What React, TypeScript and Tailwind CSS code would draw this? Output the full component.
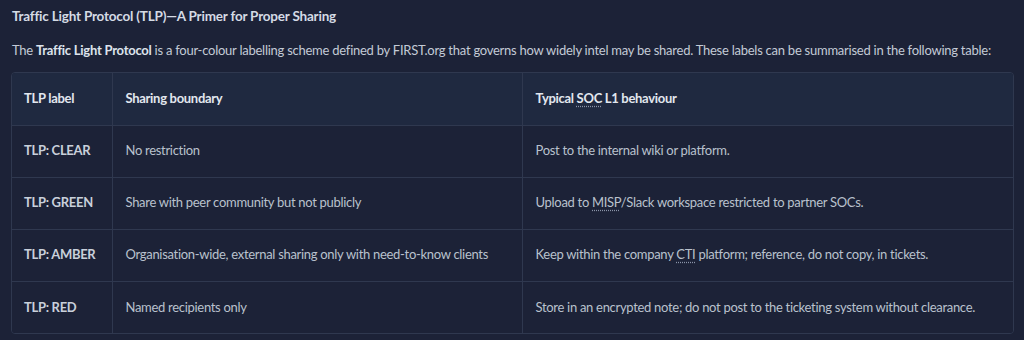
import React from 'react';

const Abbr = ({ children }: { children: React.ReactNode }) => (
  <abbr className="underline decoration-dotted decoration-[#8a94a8] underline-offset-[3px]">{children}</abbr>
);

const rows: { label: string; boundary: string; behaviour: React.ReactNode }[] = [
  { label: 'TLP: CLEAR', boundary: 'No restriction', behaviour: 'Post to the internal wiki or platform.' },
  {
    label: 'TLP: GREEN',
    boundary: 'Share with peer community but not publicly',
    behaviour: (
      <>
        Upload to <Abbr>MISP</Abbr>/Slack workspace restricted to partner SOCs.
      </>
    ),
  },
  {
    label: 'TLP: AMBER',
    boundary: 'Organisation-wide, external sharing only with need-to-know clients',
    behaviour: (
      <>
        Keep within the company <Abbr>CTI</Abbr> platform; reference, do not copy, in tickets.
      </>
    ),
  },
  {
    label: 'TLP: RED',
    boundary: 'Named recipients only',
    behaviour: 'Store in an encrypted note; do not post to the ticketing system without clearance.',
  },
];

export default function App() {
  return (
    <div className="w-[1024px] h-[340px] bg-[#1c2237] px-[11px] pt-[7px] font-['Lato',sans-serif] text-[13px] tracking-[-0.25px] overflow-hidden">
      <h3 className="ml-[1px] font-bold text-[13.5px] tracking-[-0.2px] text-[#d5dbe5] leading-[18px]">Traffic Light Protocol (TLP)—A Primer for Proper Sharing</h3>
      <p className="ml-[1px] mt-[16px] text-[#c3cad6] leading-[18px] whitespace-nowrap">
        The <strong className="font-bold text-[#dde3ec]">Traffic Light Protocol</strong> is a four-colour labelling scheme defined by FIRST.org that governs how widely intel may be shared. These labels can be summarised in the following table:
      </p>
      <div className="mt-[13px] w-[1003px] border border-[#2f384f] rounded-[4px] overflow-hidden">
        <table className="w-full border-collapse table-fixed whitespace-nowrap tracking-[-0.3px]">
          <colgroup>
            <col className="w-[100px]" />
            <col className="w-[410px]" />
            <col />
          </colgroup>
          <thead>
            <tr className="bg-[#1f2940] h-[52px]">
              <th className="text-left font-bold text-[#e2e7ef] px-[12px] border-r border-[#2f384f]">TLP label</th>
              <th className="text-left font-bold text-[#e2e7ef] px-[13px] border-r border-[#2f384f]">Sharing boundary</th>
              <th className="text-left font-bold text-[#e2e7ef] px-[13px]">
                Typical <Abbr>SOC</Abbr> L1 behaviour
              </th>
            </tr>
          </thead>
          <tbody>
            {rows.map((r) => (
              <tr key={r.label} className="h-[52px] border-t border-[#2f384f] bg-[#1c2237]">
                <td className="px-[12px] font-bold text-[#c9d0db] border-r border-[#2f384f]">{r.label}</td>
                <td className="px-[13px] text-[#b9c1cd] border-r border-[#2f384f]">{r.boundary}</td>
                <td className="px-[13px] text-[#b9c1cd]">{r.behaviour}</td>
              </tr>
            ))}
          </tbody>
        </table>
      </div>
    </div>
  );
}
